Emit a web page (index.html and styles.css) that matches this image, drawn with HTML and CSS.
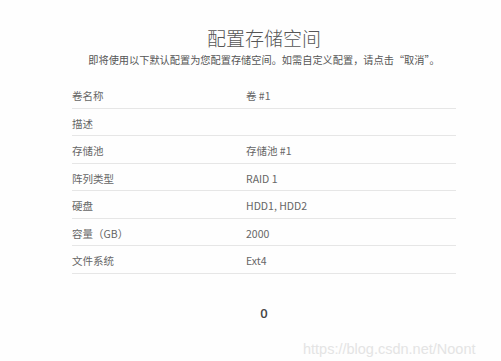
FILE: index.html
```html
<!DOCTYPE html>
<html lang="zh-CN">
<head>
    <meta charset="UTF-8">
    <meta name="viewport" content="width=device-width, initial-scale=1.0">
    <title>配置存储空间</title>
    <link rel="stylesheet" href="styles.css">
</head>
<body>
    <div id="wizard">
        <h1>配置存储空间</h1>
        <p class="intro">即将使用以下默认配置为您配置存储空间。如需自定义配置，请点击“取消”。</p>

        <!-- 配置摘要 -->
        <div class="summary">
            <div class="row"><span class="label">卷名称</span><span class="value">卷 #1</span></div>
            <div class="row"><span class="label">描述</span><span class="value"></span></div>
            <div class="row"><span class="label">存储池</span><span class="value">存储池 #1</span></div>
            <div class="row"><span class="label">阵列类型</span><span class="value">RAID 1</span></div>
            <div class="row"><span class="label">硬盘</span><span class="value">HDD1, HDD2</span></div>
            <div class="row"><span class="label">容量（GB）</span><span class="value">2000</span></div>
            <div class="row"><span class="label">文件系统</span><span class="value">Ext4</span></div>
        </div>

        <div class="counter">0</div>
    </div>
    <div class="watermark">https://blog.csdn.net/Noont</div>
</body>
</html>
```

FILE: styles.css
```css
body {
    margin: 0;
    padding: 0;
    background-color: #fefefe;
    font-family: "Noto Sans CJK SC", "Noto Sans", sans-serif;
    color: #666;
}
#wizard {
    width: 384px;
    margin-left: 72px;
    padding-top: 26px;
}
h1 {
    margin: 0;
    font-size: 19px;
    font-weight: 300;
    line-height: 24px;
    color: #555;
    text-align: center;
}
.intro {
    margin: 3px 0 0 0;
    font-size: 10.2px;
    line-height: 14px;
    color: #555;
    text-align: center;
}
.summary {
    margin-top: 14px;
}
.row {
    display: grid;
    grid-template-columns: 174px 1fr;
    height: 26.5px;
    align-items: center;
    border-bottom: 1px solid #e6e6e6;
    font-size: 10.5px;
    line-height: 14px;
}
.row span {
    padding-top: 4px;
}
.counter {
    margin-top: 30px;
    text-align: center;
    font-family: "Open Sans", sans-serif;
    font-size: 13px;
    font-weight: 600;
    color: #444;
}
.watermark {
    position: absolute;
    left: 303px;
    top: 341px;
    font-family: "Liberation Sans", sans-serif;
    font-size: 14.5px;
    color: #e4e4e4;
}
```
